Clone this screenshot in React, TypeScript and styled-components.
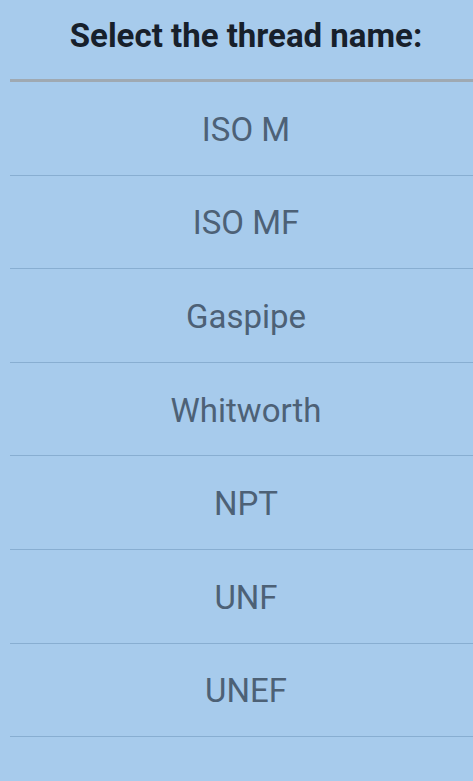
import React from 'react';
import styled, { createGlobalStyle } from 'styled-components';

const GlobalStyle = createGlobalStyle`
  html, body {
    margin: 0;
    padding: 0;
    background: #a7cbec;
  }
  body {
    font-family: Roboto, "Noto Sans", sans-serif;
  }
`;

const Page = styled.div`
  width: 473px;
  min-height: 781px;
  background: #a7cbec;
  display: flex;
  flex-direction: column;
`;

const Header = styled.h1`
  margin: 0;
  height: 79px;
  display: flex;
  align-items: center;
  justify-content: center;
  padding: 0 0 8px 19px;
  box-sizing: border-box;
  font-size: 33px;
  font-weight: 700;
  color: #17202b;
`;

const HeaderRule = styled.div`
  margin-left: 10px;
  height: 3px;
  background: #9fa9b2;
`;

const List = styled.ul`
  list-style: none;
  margin: 0;
  padding: 0;
`;

const Item = styled.li`
  margin-left: 10px;
  height: 93.6px;
  box-sizing: border-box;
  border-bottom: 1px solid #88aed1;
  display: flex;
  align-items: center;
  justify-content: center;
  padding: 2px 0 0 9px;
  font-size: 33px;
  color: #4d6176;
`;

const threads = ['ISO M', 'ISO MF', 'Gaspipe', 'Whitworth', 'NPT', 'UNF', 'UNEF'];

const App: React.FC = () => (
  <Page>
    <GlobalStyle />
    <Header>Select the thread name:</Header>
    <HeaderRule />
    <List>
      {threads.map((name) => (
        <Item key={name}>{name}</Item>
      ))}
    </List>
  </Page>
);

export default App;
